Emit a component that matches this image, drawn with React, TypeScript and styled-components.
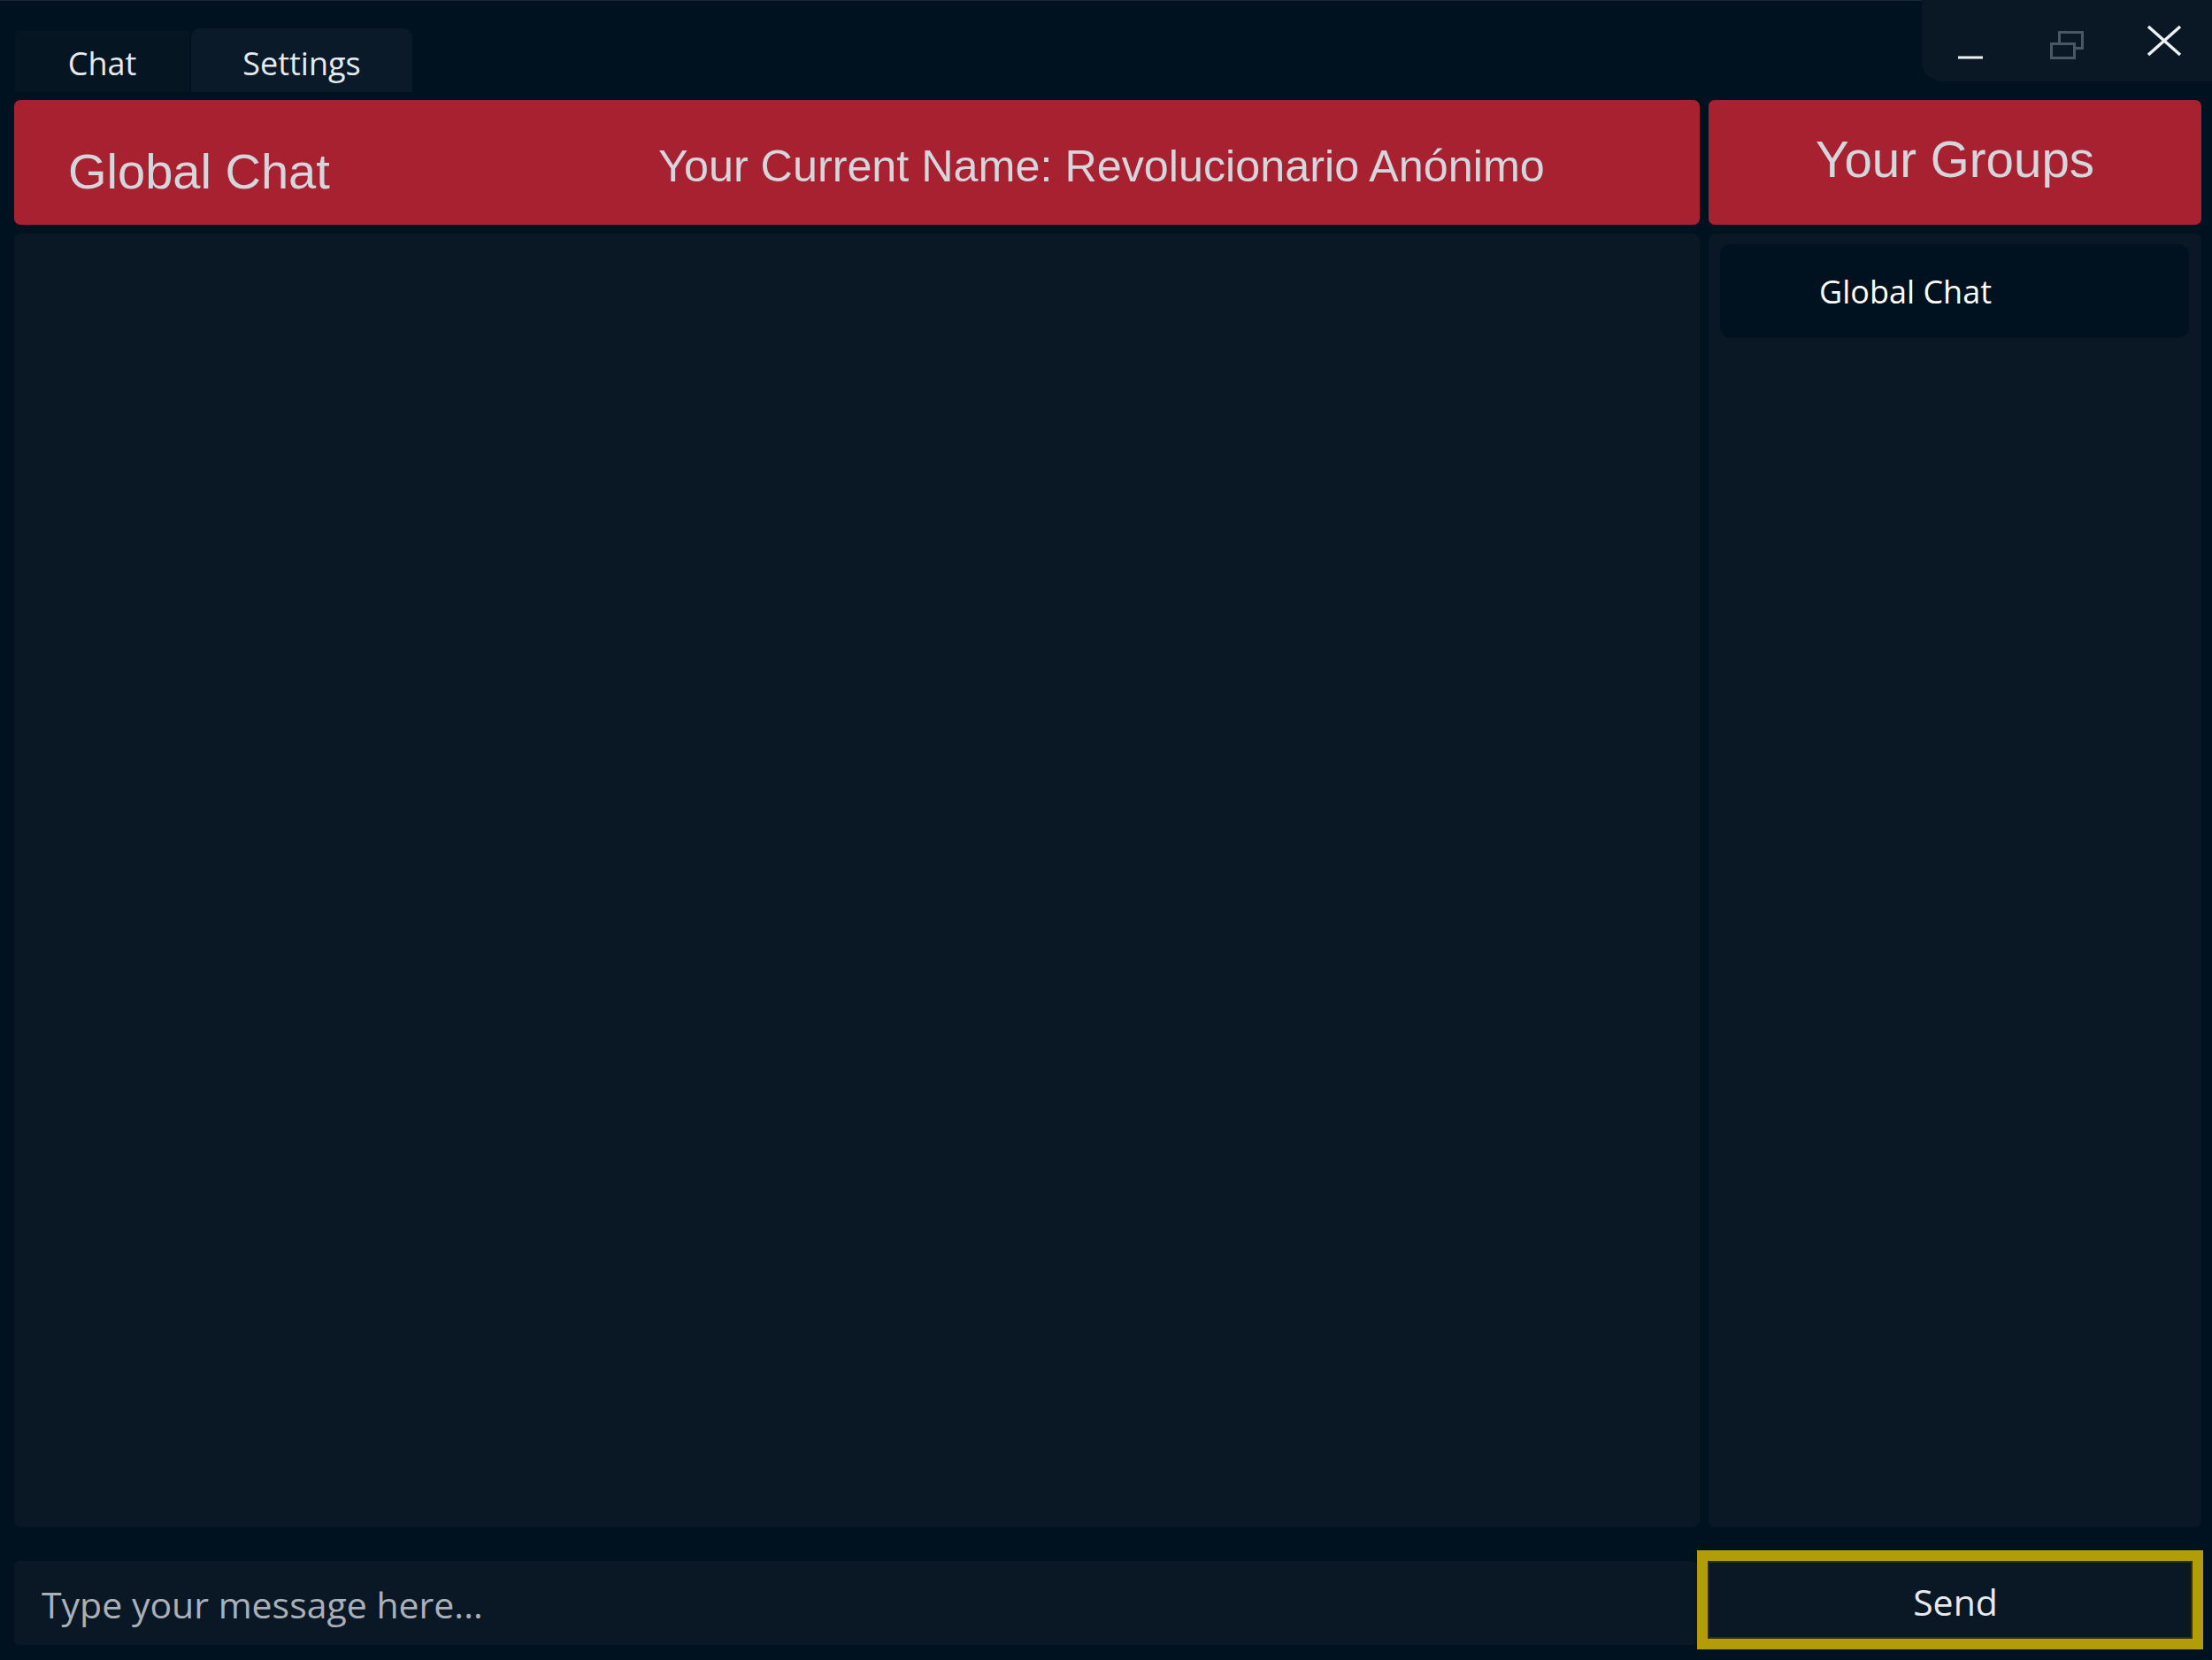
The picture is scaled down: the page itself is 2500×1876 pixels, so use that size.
import React, { useState } from 'react';
import styled, { createGlobalStyle } from 'styled-components';

const color = {
  base: '#00111f',
  panel: '#0a1826',
  tabIdle: '#051522',
  tabActive: '#0a1a28',
  red: '#a82131',
  headerText: '#d5d6db',
  text: '#e6eaef',
  placeholder: '#a9b0b8',
  gold: '#b29c07',
  dimIcon: '#4b5663',
};

const uiFont = `'Open Sans', 'Noto Sans', sans-serif`;
const headFont = `'Liberation Sans', Arial, sans-serif`;

const GlobalStyle = createGlobalStyle`
  html, body {
    margin: 0;
    padding: 0;
    background: ${color.base};
  }
  * {
    box-sizing: border-box;
  }
`;

export default function App() {
  const [tab, setTab] = useState('chat');
  const [message, setMessage] = useState('');
  const groups = ['Global Chat'];

  return (
    <>
      <GlobalStyle />
      <Window>
        <TitleBar>
          <Tabs>
            <Tab $active={tab === 'chat'} $width={197} onClick={() => setTab('chat')}>
              Chat
            </Tab>
            <Tab $active={tab === 'settings'} $width={250} $raised onClick={() => setTab('settings')}>
              Settings
            </Tab>
          </Tabs>
          <WindowControls>
            <ControlButton aria-label="minimize">
              <svg width="110" height="92" viewBox="0 0 110 92">
                <line x1="41" y1="65" x2="69" y2="65" stroke="#eef1f4" strokeWidth="3" />
              </svg>
            </ControlButton>
            <ControlButton aria-label="restore" disabled>
              <svg width="110" height="92" viewBox="0 0 110 92">
                <rect x="45.5" y="36.5" width="26" height="18" fill="none" stroke={color.dimIcon} strokeWidth="3" />
                <rect x="36.5" y="49.5" width="26" height="16" fill={color.panel} stroke={color.dimIcon} strokeWidth="3" />
              </svg>
            </ControlButton>
            <ControlButton aria-label="close">
              <svg width="110" height="92" viewBox="0 0 110 92">
                <path d="M36 30 L72 62 M72 30 L36 62" stroke="#eef1f4" strokeWidth="3.5" fill="none" />
              </svg>
            </ControlButton>
          </WindowControls>
        </TitleBar>

        <Main>
          <ChatHeader>
            <RoomTitle>Global Chat</RoomTitle>
            <CurrentName>Your Current Name: Revolucionario Anónimo</CurrentName>
          </ChatHeader>
          <GroupsHeader>Your Groups</GroupsHeader>
          <Messages />
          <GroupList>
            {groups.map(name => (
              <GroupItem key={name}>{name}</GroupItem>
            ))}
          </GroupList>
        </Main>

        <Composer>
          <MessageInput
            type="text"
            placeholder="Type your message here..."
            value={message}
            onChange={e => setMessage(e.target.value)}
          />
          <SendButton type="button">Send</SendButton>
        </Composer>
      </Window>
    </>
  );
}

const Window = styled.div`
  width: 2500px;
  height: 1876px;
  background: ${color.base};
  box-shadow: inset 0 1px 0 #1b2834;
  display: flex;
  flex-direction: column;
  overflow: hidden;
`;

const TitleBar = styled.div`
  height: 104px;
  display: flex;
  align-items: flex-start;
  padding-left: 17px;
`;

const Tabs = styled.div`
  align-self: flex-end;
  display: flex;
  align-items: flex-end;
  gap: 2px;
`;

const Tab = styled.button<{ $active: boolean; $width: number; $raised?: boolean }>`
  width: ${p => p.$width}px;
  height: ${p => (p.$raised ? 72 : 69)}px;
  border: none;
  border-radius: ${p => (p.$raised ? '10px 10px 0 0' : '0')};
  background: ${p => (p.$raised ? color.tabActive : color.tabIdle)};
  color: ${color.text};
  font-family: ${uiFont};
  font-size: 36px;
  line-height: 1;
  padding: ${p => (p.$raised ? '7px' : '4px')} 0 0;
  cursor: pointer;
`;

const WindowControls = styled.div`
  margin-left: auto;
  width: 328px;
  height: 92px;
  display: flex;
  background: ${color.panel};
  border-bottom-left-radius: 22px;
`;

const ControlButton = styled.button`
  width: 110px;
  height: 92px;
  flex: none;
  padding: 0;
  border: none;
  background: transparent;
  display: block;
  cursor: pointer;
  svg {
    display: block;
  }
`;

const Main = styled.div`
  margin-top: 9px;
  padding: 0 12px 0 16px;
  display: grid;
  grid-template-columns: 1905px 557px;
  grid-template-rows: 141px 1462px;
  column-gap: 10px;
  row-gap: 10px;
`;

const ChatHeader = styled.div`
  background: ${color.red};
  border-radius: 7px;
  display: flex;
  align-items: center;
  padding-left: 61px;
  color: ${color.headerText};
  font-family: ${headFont};
`;

const RoomTitle = styled.div`
  font-size: 56px;
  padding-top: 20px;
  width: 667px;
  flex: none;
`;

const CurrentName = styled.div`
  font-size: 50.3px;
  padding-top: 7px;
  white-space: nowrap;
`;

const GroupsHeader = styled.div`
  background: ${color.red};
  border-radius: 7px;
  display: flex;
  align-items: center;
  justify-content: center;
  padding-bottom: 6px;
  color: ${color.headerText};
  font-family: ${headFont};
  font-size: 56.5px;
`;

const Messages = styled.div`
  background: ${color.panel};
  border-radius: 8px;
`;

const GroupList = styled.div`
  background: ${color.panel};
  border-radius: 8px;
  padding: 12px 14px 0 13px;
  display: flex;
  flex-direction: column;
  gap: 10px;
`;

const GroupItem = styled.div`
  height: 106px;
  border-radius: 12px;
  background: ${color.base};
  display: flex;
  align-items: center;
  padding-left: 112px;
  color: #ffffff;
  font-family: ${uiFont};
  font-size: 36px;
`;

const Composer = styled.div`
  margin-top: 26px;
  height: 112px;
  padding-left: 16px;
  padding-right: 10px;
  display: flex;
  align-items: flex-start;
`;

const MessageInput = styled.input`
  flex: 1;
  margin-top: 12px;
  height: 95px;
  border: none;
  outline: none;
  border-radius: 6px;
  background: ${color.panel};
  padding: 3px 0 0 31px;
  color: ${color.text};
  font-family: ${uiFont};
  font-size: 41px;
  &::placeholder {
    color: ${color.placeholder};
  }
`;

const SendButton = styled.button`
  width: 572px;
  height: 112px;
  flex: none;
  border: 12px solid ${color.gold};
  background: ${color.panel};
  box-shadow: inset 0 0 0 2px #2b2f1c;
  color: ${color.text};
  font-family: ${uiFont};
  font-size: 41px;
  line-height: 1;
  padding: 4px 0 0 12px;
  cursor: pointer;
`;
